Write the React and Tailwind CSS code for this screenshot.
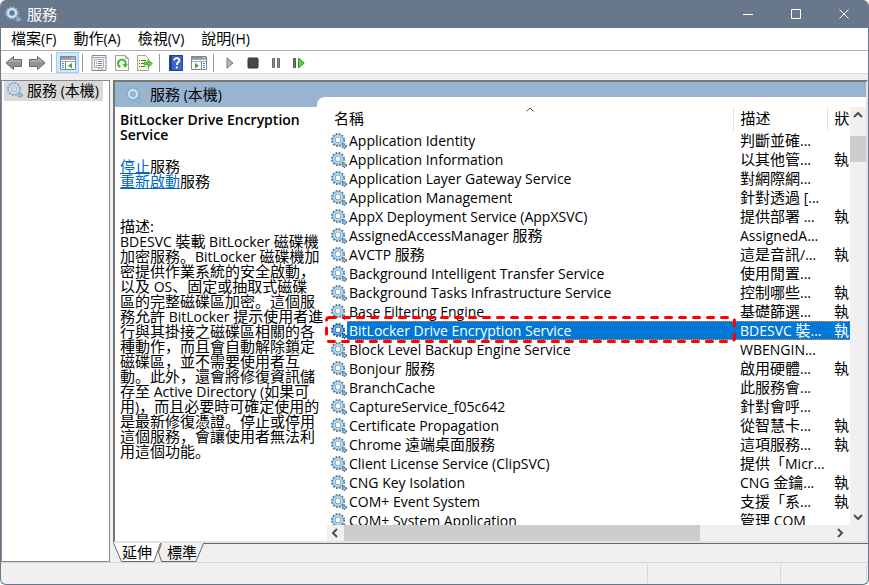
import React, { useState } from "react";

const services = [
  { name: "Application Identity", description: "判斷並確...", running: false },
  { name: "Application Information", description: "以其他管...", running: true },
  { name: "Application Layer Gateway Service", description: "對網際網...", running: false },
  { name: "Application Management", description: "針對透過 [...", running: false },
  { name: "AppX Deployment Service (AppXSVC)", description: "提供部署 ...", running: true },
  { name: "AssignedAccessManager 服務", description: "AssignedA...", running: false },
  { name: "AVCTP 服務", description: "這是音訊/...", running: true },
  { name: "Background Intelligent Transfer Service", description: "使用閒置...", running: false },
  { name: "Background Tasks Infrastructure Service", description: "控制哪些...", running: true },
  { name: "Base Filtering Engine", description: "基礎篩選...", running: true },
  { name: "BitLocker Drive Encryption Service", description: "BDESVC 裝...", running: true },
  { name: "Block Level Backup Engine Service", description: "WBENGIN...", running: false },
  { name: "Bonjour 服務", description: "啟用硬體...", running: true },
  { name: "BranchCache", description: "此服務會...", running: false },
  { name: "CaptureService_f05c642", description: "針對會呼...", running: false },
  { name: "Certificate Propagation", description: "從智慧卡...", running: true },
  { name: "Chrome 遠端桌面服務", description: "這項服務...", running: true },
  { name: "Client License Service (ClipSVC)", description: "提供「Micr...", running: false },
  { name: "CNG Key Isolation", description: "CNG 金鑰...", running: true },
  { name: "COM+ Event System", description: "支援「系...", running: true },
  { name: "COM+ System Application", description: "管理 COM", running: false },
];

const details = [
  "BDESVC 裝載 BitLocker 磁碟機",
  "加密服務。BitLocker 磁碟機加",
  "密提供作業系統的安全啟動，",
  "以及 OS、固定或抽取式磁碟",
  "區的完整磁碟區加密。這個服",
  "務允許 BitLocker 提示使用者進",
  "行與其掛接之磁碟區相關的各",
  "種動作，而且會自動解除鎖定",
  "磁碟區，並不需要使用者互",
  "動。此外，還會將修復資訊儲",
  "存至 Active Directory (如果可",
  "用)，而且必要時可確定使用的",
  "是最新修復憑證。停止或停用",
  "這個服務，會讓使用者無法利",
  "用這個功能。",
];

const menus = ["檔案(F)", "動作(A)", "檢視(V)", "說明(H)"];

// Latin runs are set one step smaller than the Chinese around them
const Mixed = ({ text }) =>
  text
    .split(/([\x20-\x7e]+)/)
    .filter(Boolean)
    .map((part, index) =>
      /^[\x20-\x7e]/.test(part) ? (
        <span key={index} className="text-sm leading-none">
          {part}
        </span>
      ) : (
        part
      )
    );

const Gear = ({ selected = false, pale = false }) => {
  const teeth = selected ? "#0f4f90" : pale ? "#7fa6c6" : "#4f7391";
  const edge = selected ? "#1c66ad" : pale ? "#8db3d0" : "#6f9bbd";
  const ring = selected ? "#6db2ea" : pale ? "#cbe4f4" : "#b5d8ec";
  return (
    <svg viewBox="0 0 16 16" className="size-4 shrink-0" fill="none" aria-hidden="true">
      <circle cx="7" cy="7" r="6" stroke={teeth} strokeWidth="2" strokeDasharray="1.7 1.44" />
      <circle cx="7" cy="7" r="4.1" stroke={edge} strokeWidth="3.4" />
      <circle cx="7" cy="7" r="4.1" stroke={ring} strokeWidth="2" />
      <circle cx="13.200" cy="13.200" r="2.1" stroke={teeth} strokeWidth="1.5" strokeDasharray="1.1 1.1" />
      <circle cx="13.200" cy="13.200" r="1.3" stroke={edge} strokeWidth="1.5" />
    </svg>
  );
};

const Arrow = ({ flip = false }) => (
  <svg viewBox="0 0 18 16" className={`h-4 w-[18px] ${flip ? "-scale-x-100" : ""}`} aria-hidden="true">
    <path d="M1 8 8.5 1.5V4.500h8v7h-8v3Z" fill="#929292" stroke="#686868" strokeLinejoin="round" />
    <path d="M3.5 7.6 7.5 4v2h8" fill="none" stroke="#c2c2c2" />
  </svg>
);

const Panel = ({ flip = false }) => (
  <svg viewBox="0 0 16 14" className="h-3.5 w-4" aria-hidden="true">
    <path d="M.5.5h15v13H.5z" fill="#fff" stroke="#7d8794" />
    <path d="M1 1h14v2H1z" fill="#8d98a6" />
    <path d="M1 3.5h14M1 5.5h14" stroke="#a4adb8" />
    <path d="M11.5 2h1m1 0h1" stroke="#fff" />
    {flip ? (
      <>
        <path d="M10.5 5.5v8" stroke="#7d8794" />
        <path d="M12 7.5h2m-2 2h2m-2 2h2" stroke="#4d7fb8" />
        <path d="m4 6.8 4 2.9-4 2.9Z" fill="#43b02e" />
      </>
    ) : (
      <>
        <path d="M5.5 5.5v8" stroke="#7d8794" />
        <path d="M2 7.5h2m-2 2h2m-2 2h2" stroke="#4d7fb8" />
        <path d="m12 6.8-4 2.9 4 2.9Z" fill="#43b02e" />
      </>
    )}
  </svg>
);

const Properties = () => (
  <svg viewBox="0 0 16 16" className="size-4" aria-hidden="true">
    <path d="M1 .5h14v15H1z" fill="#f6f6f6" stroke="#8a8a8a" />
    <path d="M2 2.5h12" stroke="#9aa4af" />
    <path d="M3.5 4.5h9v8h-9z" fill="#fff" stroke="#a8adb3" />
    <path d="M5 6.5h1m1 0h4M5 8.5h1m1 0h4M5 10.5h1m1 0h4" stroke="#6b8aad" />
    <path d="M7 14h2m1 0h2" stroke="#8a8a8a" />
  </svg>
);

const Refresh = () => (
  <svg viewBox="0 0 16 16" className="size-4" fill="none" aria-hidden="true">
    <path d="M1.5.5h10l3 3v12h-13z" fill="#fbfbf4" stroke="#a3a39b" />
    <path d="M11.5.5v3h3" stroke="#a3a39b" />
    <path d="M6.4 12A3.8 3.8 0 1 1 11.5 9.5" stroke="#3fae35" strokeWidth="2" />
    <path d="m8.5 9 5.5.2-3 3.6Z" fill="#3fae35" />
  </svg>
);

const Export = () => (
  <svg viewBox="0 0 17 16" className="h-4 w-[17px]" fill="none" aria-hidden="true">
    <path d="M1.5.5h8l3 3v12h-11z" fill="#fdf8df" stroke="#aaa48a" />
    <path d="M3 5.5h1m1 0h5M3 8.5h1m1 0h3M3 11.5h1m1 0h4" stroke="#666" />
    <path d="M8 7h4V4.5L16.5 8.5 12 12.5V10H8Z" fill="#5fc94a" stroke="#37a028" strokeWidth=".6" />
  </svg>
);

const Help = () => (
  <svg viewBox="0 0 14 16" className="h-4 w-3.5" fill="none" aria-hidden="true">
    <path d="M.5.5h13v15H.5z" fill="#3f66c4" stroke="#24418f" />
    <path d="M1 1h2v14H1z" fill="#24418f" />
    <path d="M5.2 5.4c0-3.2 5.1-3 5.1 0C10.3 7.4 7.8 7.2 7.8 10" stroke="#fff" strokeWidth="1.8" />
    <path d="M6.9 11.5h1.8v1.9H6.9z" fill="#fff" />
  </svg>
);

const Play = () => (
  <svg viewBox="0 0 12 12" className="size-3" aria-hidden="true">
    <path d="M3 .8 9 6l-6 5.2Z" fill="#b4b4b4" stroke="#7d7d7d" />
  </svg>
);

const Stop = () => (
  <svg viewBox="0 0 12 12" className="size-3" aria-hidden="true">
    <rect x="1" y="1" width="10" height="10" rx="1" fill="#4a4a4a" stroke="#333" />
  </svg>
);

const Pause = () => (
  <svg viewBox="0 0 12 12" className="size-3" aria-hidden="true">
    <path d="M2.5 1.5h2v9h-2zM7.5 1.5h2v9h-2z" fill="#8c8c8c" stroke="#6a6a6a" />
  </svg>
);

const Restart = () => (
  <svg viewBox="0 0 12 12" className="size-3" aria-hidden="true">
    <path d="M.5 1.5h2v9h-2z" fill="#777" stroke="#555" />
    <path d="M5.5 1 11.2 6l-5.7 5Z" fill="#5fd04a" stroke="#2f9e22" />
  </svg>
);

const toolbar = [
  [
    { label: "上一頁", icon: <Arrow /> },
    { label: "下一頁", icon: <Arrow flip /> },
  ],
  [{ label: "顯示/隱藏主控台樹狀目錄", icon: <Panel />, active: true }],
  [
    { label: "內容", icon: <Properties /> },
    { label: "重新整理", icon: <Refresh /> },
    { label: "匯出清單", icon: <Export /> },
  ],
  [
    { label: "說明", icon: <Help /> },
    { label: "顯示/隱藏執行窗格", icon: <Panel flip /> },
  ],
  [
    { label: "啟動服務", icon: <Play /> },
    { label: "停止服務", icon: <Stop /> },
    { label: "暫停服務", icon: <Pause /> },
    { label: "重新啟動服務", icon: <Restart /> },
  ],
];

const ScrollButton = ({ label, d }) => (
  <button type="button" aria-label={label} className="flex size-4 shrink-0 items-center justify-center">
    <svg viewBox="0 0 10 10" className="size-2.5" fill="none" stroke="#505050" strokeWidth="2" aria-hidden="true">
      <path d={d} />
    </svg>
  </button>
);

const TitleBar = () => (
  <header className="flex h-7 shrink-0 items-center bg-[#68778a] pl-1 text-white">
    <Gear pale />
    <h1 className="ml-1.5 flex-1 text-[15px]">服務</h1>
    {[
      { label: "最小化", d: "M0 5.5h10" },
      { label: "最大化", d: "M.5.5h9v9h-9z" },
      { label: "關閉", d: "m.5.5 9 9m0-9-9 9" },
    ].map((button) => (
      <button
        key={button.label}
        type="button"
        aria-label={button.label}
        className="flex h-full w-12 items-center justify-center"
      >
        <svg viewBox="0 0 10 10" className="size-2.5" fill="none" stroke="currentColor" aria-hidden="true">
          <path d={button.d} />
        </svg>
      </button>
    ))}
  </header>
);

const ServiceTable = ({ selected, onSelect }) => (
  <div className="min-h-0 flex-1 overflow-hidden pl-1">
    <table className="w-full table-fixed border-collapse text-left text-[15px]">
      <thead>
        <tr className="h-6">
          <th className="relative border-r border-[#e0e0e0] p-0 pb-0.5 pl-[7px] font-normal">
            名稱
            <svg
              viewBox="0 0 8 5"
              className="absolute top-0 left-1/2 h-[5px] w-2 -translate-x-1/2"
              fill="none"
              stroke="#555"
              aria-hidden="true"
            >
              <path d="m.5 4.5 3.5-3.5 3.5 3.5" />
            </svg>
          </th>
          <th className="w-[94px] border-r border-[#e0e0e0] p-0 pb-0.5 pl-[7px] font-normal">描述</th>
          <th className="w-[23px] overflow-hidden p-0 pb-0.5 pl-[7px] font-normal whitespace-nowrap">狀</th>
        </tr>
      </thead>
      <tbody>
        {services.map((service) => {
          const active = service.name === selected;
          const fill = active
            ? "border-y border-dotted border-[#ff8728] bg-[#0078d7] text-white"
            : "";
          return (
            <tr key={service.name} onClick={() => onSelect(service.name)} className="h-[19px]">
              <td className="relative p-0">
                <div className="flex h-[19px] items-center pl-1">
                  <Gear selected={active} />
                  <span className={`flex h-[19px] flex-1 items-center whitespace-pre pl-0.5 ${fill}`}>
                    <Mixed text={service.name} />
                  </span>
                </div>
                {active && (
                  <svg
                    className="absolute -top-[5px] -left-0.5 z-10 h-[27px] w-[calc(100%+6px)] overflow-visible"
                    aria-hidden="true"
                  >
                    <rect
                      x="1.5"
                      y="1.5"
                      width="99%"
                      height="24"
                      rx="3"
                      fill="none"
                      stroke="#ff0000"
                      strokeWidth="3"
                      strokeLinecap="round"
                      strokeDasharray="6 8"
                    />
                  </svg>
                )}
              </td>
              <td className="p-0">
                <div className={`flex h-[19px] items-center overflow-hidden whitespace-pre pl-[7px] ${fill}`}>
                  <Mixed text={service.description} />
                </div>
              </td>
              <td className="p-0">
                <div className={`flex h-[19px] items-center overflow-hidden whitespace-pre pl-[7px] ${fill}`}>
                  {service.running && "執"}
                </div>
              </td>
            </tr>
          );
        })}
      </tbody>
    </table>
  </div>
);

const Tab = ({ label, active, onClick }) => (
  <button type="button" onClick={onClick} className="relative -mr-[3px] h-[19px] w-12 text-[15px] leading-[17px]">
    <svg
      viewBox="0 0 48 19"
      className="absolute inset-0 h-full w-full"
      fill={active ? "#fff" : "#f0f0f0"}
      stroke="#696969"
      aria-hidden="true"
    >
      {active ? (
        <>
          <path d="M0 0h48l-6.500 18.500h-33z" stroke="none" />
          <path d="M.5 0 8.500 18.500h32.500L47.500 0" />
        </>
      ) : (
        <path d="M3.500 .5 .5 9l3 9.500h34.500L45.500 .5" />
      )}
    </svg>
    <span className="relative">{label}</span>
  </button>
);

const App = () => {
  const [selected, setSelected] = useState("BitLocker Drive Encryption Service");
  const [tab, setTab] = useState("延伸");

  return (
    <div className="flex h-screen flex-col overflow-hidden rounded-md border-x border-b border-[#68778a] bg-[#f0f0f0] font-['Open_Sans','Noto_Sans_CJK_SC',sans-serif] text-[15px] leading-[19px] text-black">
      <TitleBar />

      <nav className="flex h-[23px] shrink-0 items-center gap-[17px] border-b border-[#b0b0b0] bg-white pb-0.5 pl-2.5">
        {menus.map((menu) => (
          <button key={menu} type="button">
            <Mixed text={menu} />
          </button>
        ))}
      </nav>

      <div className="flex h-[23px] shrink-0 items-center border-b border-[#dcdcdc] bg-white pt-px pl-px">
        {toolbar.map((group, index) => (
          <React.Fragment key={index}>
            {index > 0 && <span className="mx-[3px] h-[18px] w-0.5 border-l border-[#999]" />}
            {group.map((item) => (
              <button
                key={item.label}
                type="button"
                title={item.label}
                aria-label={item.label}
                className={`flex h-[21px] w-[23px] items-center justify-center ${
                  item.active ? "border border-[#99d1ff] bg-[#cce8ff]" : ""
                }`}
              >
                {item.icon}
              </button>
            ))}
          </React.Fragment>
        ))}
      </div>

      <main className="flex min-h-0 flex-1 gap-[3px] pt-1.5">
        <aside className="w-[109px] shrink-0 border border-[#828790] bg-white">
          <button
            type="button"
            className="ml-0.5 flex h-5 items-center gap-1 bg-[#d9d9d9] pr-1 pb-0.5 pl-[3px] whitespace-pre"
          >
            <Gear pale />
            <span>
              <Mixed text="服務 (本機)" />
            </span>
          </button>
        </aside>

        <div className="flex min-w-0 flex-1 flex-col">
          <section className="flex min-h-0 flex-1 flex-col border-t-2 border-r-2 border-b-2 border-l-2 border-t-[#777] border-r-[#e3e3e3] border-b-[#e3e3e3] border-l-[#777] bg-white">
            <div className="flex h-[25px] shrink-0 bg-[#99b4d1]">
              <h2 className="flex w-[202px] items-center gap-2 pl-[11px] whitespace-pre">
                <Gear pale />
                <span>
                  <Mixed text="服務 (本機)" />
                </span>
              </h2>
              <div className="mt-[15px] flex-1 rounded-tl-lg bg-white" />
            </div>

            <div className="flex min-h-0 flex-1">
              <div className="w-[208px] shrink-0 pt-[5px] pl-[5px] leading-[15px] whitespace-nowrap">
                <h3 className="text-sm leading-[15px] font-semibold">
                  BitLocker Drive Encryption
                  <br />
                  Service
                </h3>
                <p className="mt-[17px]">
                  <a href="#stop" className="text-[#0066cc] underline">
                    停止
                  </a>
                  服務
                </p>
                <p>
                  <a href="#restart" className="text-[#0066cc] underline">
                    重新啟動
                  </a>
                  服務
                </p>
                <p className="mt-[30px]">描述:</p>
                <p>
                  {details.map((line) => (
                    <span key={line} className="block">
                      <Mixed text={line} />
                    </span>
                  ))}
                </p>
              </div>

              <div className="flex min-w-0 flex-1 flex-col">
                <div className="flex min-h-0 flex-1">
                  <ServiceTable selected={selected} onSelect={setSelected} />
                  <div className="flex w-4 shrink-0 flex-col bg-[#f0f0f0]">
                    <ScrollButton label="向上捲動" d="m1 7 4-4 4 4" />
                    <div className="flex-1 pt-[13px]">
                      <div className="h-[26px] bg-[#cdcdcd]" />
                    </div>
                    <ScrollButton label="向下捲動" d="m1 3 4 4 4-4" />
                  </div>
                </div>
                <div className="ml-1 flex h-4 shrink-0 bg-[#f0f0f0] pr-[18px]">
                  <ScrollButton label="向左捲動" d="m7 1-4 4 4 4" />
                  <div className="flex-1 pl-px">
                    <div className="h-4 w-[73%] bg-[#cdcdcd]" />
                  </div>
                  <ScrollButton label="向右捲動" d="m3 1 4 4-4 4" />
                </div>
              </div>
            </div>
          </section>

          <div className="flex h-[19px] shrink-0">
            <div className="flex">
              {["延伸", "標準"].map((label) => (
                <Tab key={label} label={label} active={tab === label} onClick={() => setTab(label)} />
              ))}
            </div>
            <div className="flex-1 border-t border-[#696969]" />
          </div>
        </div>
      </main>

      <footer className="flex h-[22px] shrink-0 border-t border-[#d7d7d7] py-px">
        <div className="flex-1 border-r border-[#d7d7d7]" />
        <div className="w-[133px] border-r border-[#d7d7d7]" />
        <div className="mr-px w-[86px] border-r border-[#d7d7d7]" />
      </footer>
    </div>
  );
};

export default App;
